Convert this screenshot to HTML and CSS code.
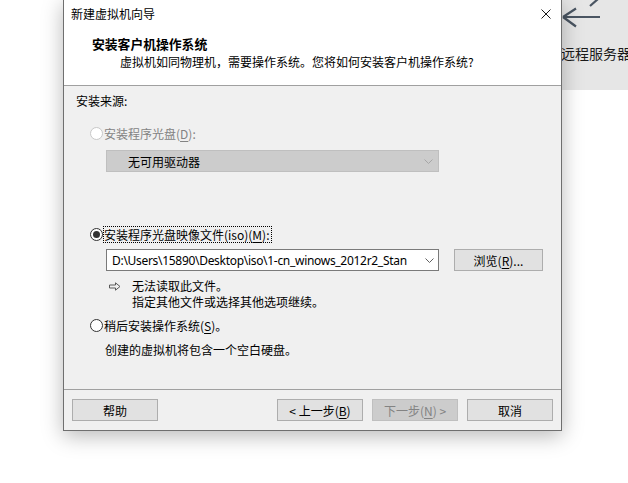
FILE: index.html
```html
<!DOCTYPE html>
<html lang="zh-CN">
<head>
<meta charset="utf-8">
<link rel="stylesheet" href="styles.css">
</head>
<body>
<div class="desk">
  <div class="bgpanel">
    <svg class="bgarrow" width="40" height="30" viewBox="0 0 40 30">
      <path d="M2 17 H39 M2 17 L15 8.5 M2 17 L15 26.5 M29 6 L37 -1" fill="none" stroke="#4a5562" stroke-width="2.2"/>
    </svg>
    <div class="bgtext">远程服务器</div>
  </div>

  <div class="dialog">
    <div class="titlebar">
      <span class="title">新建虚拟机向导</span>
      <svg class="close" width="10" height="10" viewBox="0 0 10 10">
        <path d="M0.5 0.5 L9.5 9.5 M9.5 0.5 L0.5 9.5" stroke="#1a1a1a" stroke-width="1" fill="none"/>
      </svg>
    </div>
    <div class="header">
      <div class="h-title">安装客户机操作系统</div>
      <div class="h-sub">虚拟机如同物理机，需要操作系统。您将如何安装客户机操作系统?</div>
    </div>
    <div class="body">
      <div class="label">安装来源:</div>
      <div class="radio-row r-disabled">
        <span class="radio"></span><span class="rtext">安装程序光盘(<u>D</u>):</span>
      </div>
      <div class="combo combo-disabled">
        <span class="combo-text dtext">无可用驱动器</span>
        <svg class="chev" width="9" height="5" viewBox="0 0 9 5"><path d="M0.5 0.5 L4.5 4.5 L8.5 0.5" fill="none" stroke="#a6a6a6" stroke-width="1"/></svg>
      </div>
      <div class="radio-row r-checked">
        <span class="radio"><span class="dot"></span></span><span class="rtext focus">安装程序光盘映像文件(iso)(<u>M</u>):</span>
      </div>
      <div class="iso-row">
        <div class="combo combo-iso">
          <span class="combo-text path">D:\Users\15890\Desktop\iso\1-cn_winows_2012r2_Stan</span>
          <svg class="chev" width="9" height="5" viewBox="0 0 9 5"><path d="M0.5 0.5 L4.5 4.5 L8.5 0.5" fill="none" stroke="#606060" stroke-width="1"/></svg>
        </div>
        <div class="btn browse">浏览(<u>R</u>)...</div>
      </div>
      <div class="warn">
        <svg class="warn-arrow" width="12" height="9" viewBox="0 0 12 9"><path d="M0.5 3 H6.5 V0.8 L11 4.5 L6.5 8.2 V6 H0.5 Z" fill="none" stroke="#5a5a5a" stroke-width="1"/></svg>
        <div class="warn-text">无法读取此文件。<br>指定其他文件或选择其他选项继续。</div>
      </div>
      <div class="radio-row r-later">
        <span class="radio"></span><span class="rtext">稍后安装操作系统(<u>S</u>)。</span>
      </div>
      <div class="note">创建的虚拟机将包含一个空白硬盘。</div>
    </div>
    <div class="footer">
      <div class="btn">帮助</div>
      <div class="spacer"></div>
      <div class="btn">&lt; 上一步(<u>B</u>)</div>
      <div class="btn btn-disabled">下一步(<u>N</u>) &gt;</div>
      <div class="btn">取消</div>
    </div>
  </div>
</div>
</body>
</html>
```

FILE: styles.css
```css
* { box-sizing: border-box; }
html, body {
  margin: 0;
  padding: 0;
  background: #ffffff;
  width: 628px;
  height: 483px;
  overflow: hidden;
}
body {
  font-family: "Noto Sans CJK SC", "Noto Sans", sans-serif;
  font-size: 12px;
  color: #000;
}
u { text-decoration: underline; text-underline-offset: 2px; text-decoration-thickness: 1px; }

.desk {
  position: relative;
  width: 628px;
  height: 483px;
  overflow: hidden;
}

/* background application behind the dialog */
.bgpanel {
  position: absolute;
  left: 520px;
  top: 0;
  width: 108px;
  height: 90px;
  background: #e6e6e6;
}
.bgarrow {
  position: absolute;
  left: 41px;
  top: 0;
}
.bgtext {
  position: absolute;
  left: 41px;
  top: 43px;
  font-size: 14px;
  line-height: 20px;
  color: #1b1b1b;
  white-space: nowrap;
}

/* dialog window */
.dialog {
  position: absolute;
  left: 63px;
  top: -1px;
  width: 499px;
  height: 432px;
  border: 1px solid #6f6f6f;
  background: #f0f0f0;
  box-shadow: 0 5px 20px rgba(0, 0, 0, 0.28);
  display: flex;
  flex-direction: column;
}

.titlebar {
  height: 28px;
  background: #fff;
  display: flex;
  align-items: center;
  padding-left: 7px;
  padding-right: 10px;
}
.title {
  flex: 1;
  line-height: 28px;
  color: #000;
}
.close { display: block; margin-top: -1px; }

.header {
  background: #fff;
  padding: 7px 0 14px 28px;
  border-bottom: 1px solid #a0a0a0;
  height: 58px;
}
.h-title {
  font-weight: bold;
  font-size: 12.8px;
  line-height: 18px;
}
.h-sub {
  line-height: 18px;
  margin-left: 28px;
}

.body {
  height: 304px;
  padding-top: 6px;
  display: flex;
  flex-direction: column;
  border-bottom: 1px solid #a0a0a0;
}
.label {
  line-height: 18px;
  margin-left: 12px;
}

.radio-row {
  display: flex;
  align-items: center;
  height: 18px;
  margin-left: 26px;
}
.radio {
  width: 13px;
  height: 13px;
  border-radius: 50%;
  border: 1px solid #333;
  background: #fff;
  display: flex;
  align-items: center;
  justify-content: center;
  flex: none;
}
.dot {
  width: 7px;
  height: 7px;
  border-radius: 50%;
  background: #333;
}
.rtext {
  margin-left: 1px;
  line-height: 15px;
}
.r-disabled { margin-top: 14px; }
.r-disabled .radio { border-color: #c8c8c8; }
.r-disabled .rtext { color: #838383; }
.r-checked { margin-top: 53px; }
.focus {
  outline: 1px dotted #000;
  outline-offset: 0;
  padding: 0 1px 0 0;
  margin-left: 1px;
}
.r-later { margin-top: 6px; }

.combo {
  height: 22px;
  display: flex;
  align-items: center;
  flex: none;
}
.combo-text {
  flex: 1;
  white-space: nowrap;
  overflow: hidden;
}
.chev { flex: none; display: block; }

.combo-disabled {
  margin-top: 8px;
  margin-left: 42px;
  width: 333px;
  background: #cccccc;
  border: 1px solid #bfbfbf;
  padding: 0 5px 0 21px;
}
.dtext { color: #000; }

.iso-row {
  display: flex;
  margin-top: 6px;
  margin-left: 42px;
  gap: 15px;
}
.combo-iso {
  width: 333px;
  background: #fff;
  border: 1px solid #7a7a7a;
  padding: 0 4px 0 5px;
}
.path {
  font-family: "Noto Sans", "Noto Sans CJK SC", sans-serif;
  font-size: 12px;
  letter-spacing: -0.3px;
  margin-right: 12px;
}

.btn {
  width: 86px;
  height: 22px;
  background: #e1e1e1;
  border: 1px solid #adadad;
  display: flex;
  align-items: center;
  justify-content: center;
  flex: none;
  white-space: nowrap;
}
.browse { width: 89px; }
.btn-disabled {
  background: #cccccc;
  border-color: #bfbfbf;
  color: #838383;
}

.warn {
  display: flex;
  margin-top: 7px;
  margin-left: 45px;
}
.warn-arrow {
  flex: none;
  margin-top: 4px;
}
.warn-text {
  margin-left: 11px;
  line-height: 16px;
}

.note {
  margin-top: 7px;
  margin-left: 41px;
  line-height: 18px;
}

.footer {
  flex: 1;
  display: flex;
  align-items: flex-start;
  padding: 9px 8px 0 8px;
  gap: 9px;
}
.spacer { flex: 1; }
```
